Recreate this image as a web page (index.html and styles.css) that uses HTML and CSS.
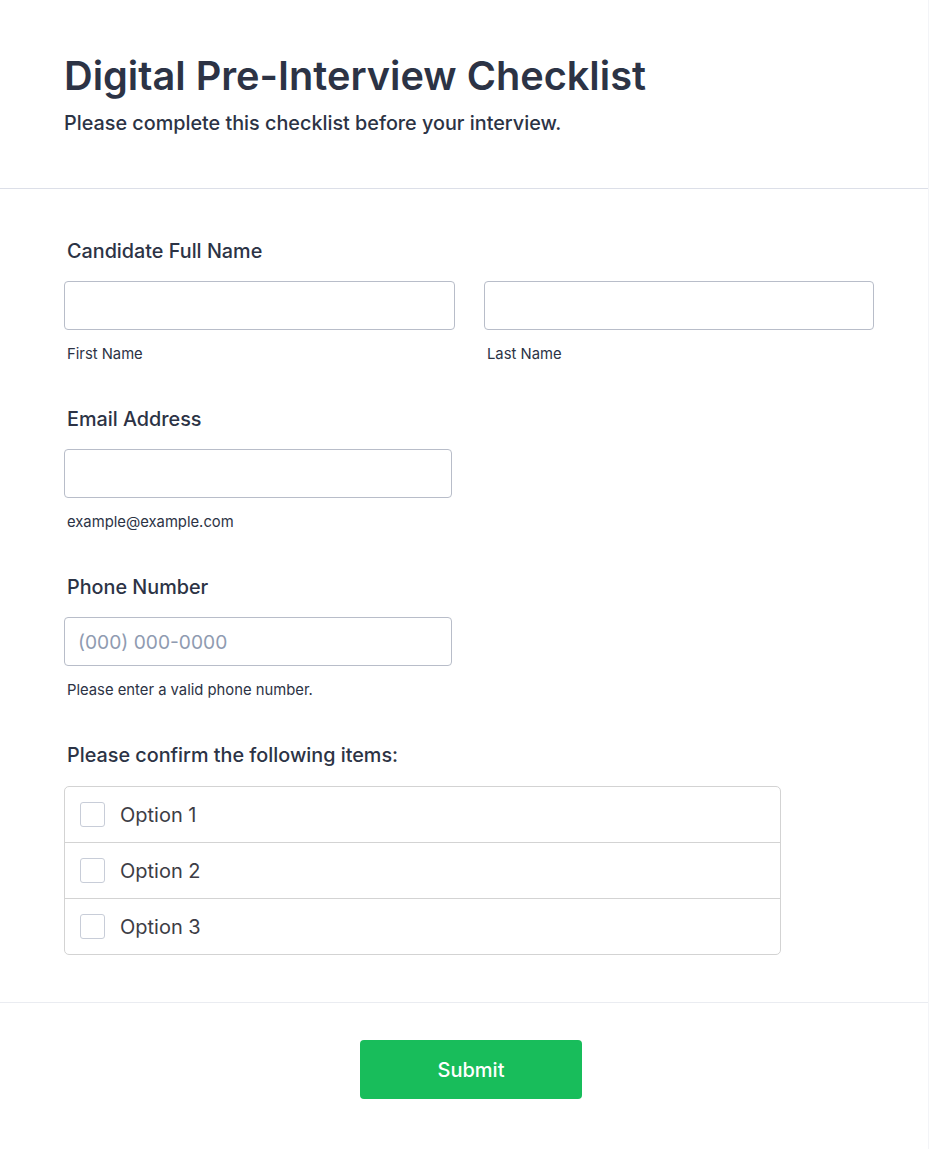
FILE: index.html
```html
<!DOCTYPE html>
<html lang="en">
<head>
<meta charset="utf-8">
<title>Digital Pre-Interview Checklist</title>
<link rel="stylesheet" href="styles.css">
</head>
<body>
<div class="page">
  <header class="header">
    <h1 class="title">Digital Pre-Interview Checklist</h1>
    <p class="subtitle">Please complete this checklist before your interview.</p>
  </header>
  <form class="form">
    <div class="question">
      <label class="label">Candidate Full Name</label>
      <div class="name-row">
        <div class="field">
          <input class="input" type="text">
          <span class="sublabel">First Name</span>
        </div>
        <div class="field field-last">
          <input class="input" type="text">
          <span class="sublabel">Last Name</span>
        </div>
      </div>
    </div>
    <div class="question">
      <label class="label">Email Address</label>
      <div class="field narrow">
        <input class="input" type="email">
        <span class="sublabel">example@example.com</span>
      </div>
    </div>
    <div class="question">
      <label class="label">Phone Number</label>
      <div class="field narrow">
        <input class="input" type="tel" placeholder="(000) 000-0000">
        <span class="sublabel">Please enter a valid phone number.</span>
      </div>
    </div>
    <div class="question">
      <label class="label label-list">Please confirm the following items:</label>
      <div class="options">
        <label class="option"><span class="box"></span><span class="option-text">Option 1</span></label>
        <label class="option"><span class="box"></span><span class="option-text">Option 2</span></label>
        <label class="option"><span class="box"></span><span class="option-text">Option 3</span></label>
      </div>
    </div>
  </form>
  <div class="footer">
    <button class="submit" type="button">Submit</button>
  </div>
</div>
</body>
</html>
```
FILE: styles.css
```css
html, body {
  margin: 0;
  padding: 0;
  background: #ffffff;
}
body {
  font-family: Inter, "Noto Sans", sans-serif;
  color: #2c3345;
}
.page {
  width: 929px;
  min-height: 1149px;
  border-right: 1px solid #f3f4f7;
  box-sizing: border-box;
}
.header {
  height: 189px;
  box-sizing: border-box;
  padding: 52px 64px 0;
  border-bottom: 1px solid #dcdfe8;
}
.title {
  margin: 0;
  font-size: 39.7px;
  line-height: 48px;
  font-weight: 600;
  color: #2c3345;
}
.subtitle {
  margin: 11px 0 0;
  font-size: 19.8px;
  line-height: 24px;
  font-weight: 500;
  color: #2c3345;
}
.form {
  padding: 50px 54px 47px 64px;
  display: flex;
  flex-direction: column;
  gap: 44px;
  border-bottom: 1px solid #eaecf1;
}
.question {
  display: flex;
  flex-direction: column;
}
.label {
  display: block;
  padding-left: 3px;
  font-size: 19.8px;
  line-height: 24px;
  font-weight: 500;
  color: #2c3345;
  margin-bottom: 18px;
}
.label-list {
  margin-bottom: 19px;
}
.name-row {
  display: flex;
  gap: 29px;
}
.field {
  display: flex;
  flex-direction: column;
  width: 392px;
}
.field.field-last {
  width: 391px;
}
.field.narrow {
  width: 388px;
}
.input {
  height: 49px;
  box-sizing: border-box;
  border: 1px solid #b8bdc9;
  border-radius: 4px;
  padding: 0 13px;
  font-family: Inter, sans-serif;
  font-size: 19.2px;
  color: #2c3345;
  background: #fff;
  outline: none;
}
.input::placeholder {
  color: #8f9bb1;
}
.sublabel {
  display: block;
  margin-top: 16px;
  padding-left: 3px;
  font-size: 14.8px;
  line-height: 17px;
  color: #2c3345;
}
.options {
  width: 717px;
  box-sizing: border-box;
  border: 1px solid #d3d3d3;
  border-radius: 5px;
  display: flex;
  flex-direction: column;
}
.option {
  display: flex;
  align-items: center;
  gap: 15px;
  height: 55px;
  padding-left: 15px;
  border-top: 1px solid #d3d3d3;
}
.option:first-child {
  border-top: 0;
}
.box {
  width: 25px;
  height: 25px;
  box-sizing: border-box;
  border: 1px solid #c8cdd8;
  border-radius: 3px;
  background: #fff;
}
.option-text {
  font-size: 20px;
  color: #3d3d45;
}
.footer {
  display: flex;
  justify-content: center;
  padding: 37px 0 50px;
}
.submit {
  width: 222px;
  height: 59px;
  border: 0;
  border-radius: 4px;
  background: #18bd5b;
  color: #ffffff;
  font-family: Inter, sans-serif;
  font-size: 20px;
  font-weight: 500;
  margin-left: 14px;
}
```
